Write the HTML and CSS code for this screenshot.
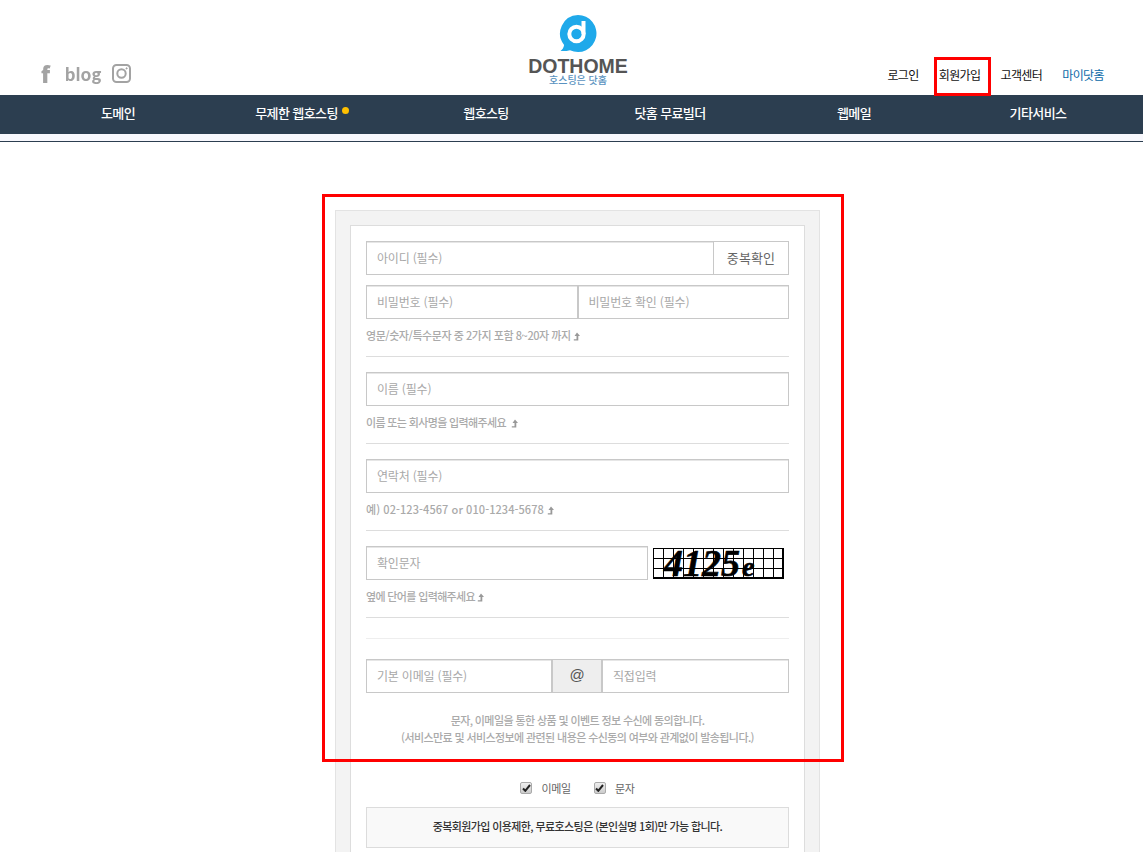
FILE: index.html
```html
<!DOCTYPE html>
<html lang="ko">
<head>
    <meta charset="UTF-8">
    <title>DOTHOME 회원가입</title>
    <link rel="stylesheet" href="styles.css">
</head>
<body>

<svg width="0" height="0" class="defs">
    <symbol id="up" viewBox="0 0 7 9">
        <path d="M4 .5L7 4H5.300V8.500H.8V7.200H3.500V4H1.500z" fill="#999"/>
    </symbol>
</svg>

<header class="top">
    <div class="sns">
        <span class="sns-f">f</span>
        <span class="sns-blog">blog</span>
        <svg class="sns-insta" width="19" height="19" viewBox="0 0 19 19" fill="none" stroke="#a3a3a3" stroke-width="2">
            <rect x="1" y="1" width="17" height="17" rx="3.5"/>
            <circle cx="9.5" cy="9.5" r="4.2"/>
            <circle cx="14.6" cy="4.4" r="0.6" fill="#a3a3a3" stroke-width="1"/>
        </svg>
    </div>
    <a class="logo">
        <svg class="logo-mark" width="40" height="38" viewBox="0 0 40 38">
            <path d="M20 1a18.500 18.500 0 1 1-8 35.200c-3 .8-6 1-9.500 .8 2-1.500 3.200-3.500 3.600-6A18.500 18.500 0 0 1 20 1z" fill="#1fa9ea"/>
            <circle cx="18.500" cy="20" r="7.200" fill="none" stroke="#fff" stroke-width="4"/>
            <path d="M25.500 7v13" stroke="#fff" stroke-width="4" fill="none"/>
        </svg>
        <span class="logo-name">DOTHOME</span>
        <span class="logo-sub">호스팅은 닷홈</span>
    </a>
    <nav class="util">
        <a>로그인</a>
        <a class="util-join">회원가입</a>
        <a>고객센터</a>
        <a class="util-my">마이닷홈</a>
    </nav>
</header>

<nav class="gnb">
    <a>도메인</a>
    <a>무제한 웹호스팅<i class="dot"></i></a>
    <a>웹호스팅</a>
    <a>닷홈 무료빌더</a>
    <a>웹메일</a>
    <a>기타서비스</a>
</nav>
<div class="gnb-line"></div>

<main class="content">
    <div class="mark-box"></div>
    <div class="outer">
        <form class="inner">
            <div class="field">
                <input class="input grow" placeholder="아이디 (필수)">
                <button type="button" class="check-btn">중복확인</button>
            </div>
            <div class="field field-gap">
                <input class="input half" placeholder="비밀번호 (필수)">
                <input class="input half" placeholder="비밀번호 확인 (필수)">
            </div>
            <p class="note note-mix">영문/숫자/특수문자 중 2가지 포함 8~20자 까지 <svg class="arrow"><use href="#up"/></svg></p>
            <hr class="sep">

            <div class="field">
                <input class="input grow" placeholder="이름 (필수)">
            </div>
            <p class="note">이름 또는 회사명을 입력해주세요 &nbsp;<svg class="arrow"><use href="#up"/></svg></p>
            <hr class="sep">

            <div class="field">
                <input class="input grow" placeholder="연락처 (필수)">
            </div>
            <p class="note note-num">예) 02-123-4567 or 010-1234-5678 <svg class="arrow"><use href="#up"/></svg></p>
            <hr class="sep">

            <div class="field">
                <input class="input captcha-input" placeholder="확인문자">
                <div class="captcha">4125<em>e</em></div>
            </div>
            <p class="note">옆에 단어를 입력해주세요 <svg class="arrow"><use href="#up"/></svg></p>
            <hr class="sep">
            <hr class="sep sep-light">

            <div class="field">
                <input class="input mail-id" placeholder="기본 이메일 (필수)">
                <div class="at">@</div>
                <input class="input grow" placeholder="직접입력">
            </div>
            <p class="agree">문자, 이메일을 통한 상품 및 이벤트 정보 수신에 동의합니다.<br>(서비스만료 및 서비스정보에 관련된 내용은 수신동의 여부와 관계없이 발송됩니다.)</p>
            <hr class="sep sep-agree">

            <div class="checks">
                <label class="check">
                    <span class="box"><svg width="9" height="8" viewBox="0 0 9 8"><path d="M1 4.500l2.300 2.300L8 1" fill="none" stroke="#222" stroke-width="2"/></svg></span>
                    이메일
                </label>
                <label class="check">
                    <span class="box"><svg width="9" height="8" viewBox="0 0 9 8"><path d="M1 4.500l2.300 2.300L8 1" fill="none" stroke="#222" stroke-width="2"/></svg></span>
                    문자
                </label>
            </div>
            <div class="notice">중복회원가입 이용제한, 무료호스팅은 (본인실명 1회)만 가능 합니다.</div>
        </form>
    </div>
</main>

</body>
</html>
```

FILE: styles.css
```css
html, body {
    margin: 0;
    height: 852px;
    overflow: hidden;
}

body {
    font-family: "Noto Sans CJK KR", "Noto Sans", sans-serif;
    font-size: 12px;
    color: #222;
    background: #fff;
}

.defs {
    display: block;
}

/* header */
.top {
    display: grid;
    grid-template-columns: 528px 100px 1fr;
    height: 95px;
}

.sns {
    display: flex;
    align-items: center;
    height: 19px;
    margin-top: 64px;
    padding-left: 41px;
    color: #a3a3a3;
}

.sns-f {
    font: 800 22px "Open Sans", sans-serif;
    width: 24px;
    filter: blur(0.4px);
}

.sns-blog {
    font: 900 18px "Lato", sans-serif;
    letter-spacing: 0.5px;
    width: 47px;
    filter: blur(0.4px);
}

.logo {
    display: flex;
    flex-direction: column;
    align-items: center;
    padding-top: 14px;
}

.logo-mark {
    display: block;
}

.logo-name {
    font: bold 19.500px/15px "Liberation Sans", sans-serif;
    color: #555;
    margin-top: 7px;
}

.logo-sub {
    font-size: 10px;
    line-height: 11px;
    font-weight: 500;
    color: #5a92c0;
}

.util {
    display: flex;
    justify-content: flex-end;
    gap: 20px;
    padding: 65px 39px 0 0;
    font-size: 12px;
    line-height: 20px;
    letter-spacing: -0.6px;
    color: #111;
}

.util-join {
    position: relative;
}

.util-join::after {
    content: "";
    position: absolute;
    left: -5px;
    top: -8px;
    width: 51px;
    height: 33px;
    border: 3px solid #f00;
}

.util-my {
    color: #0b6aa8;
}

/* main menu */
.gnb {
    display: grid;
    grid-template-columns: repeat(6, 184px);
    padding-left: 26px;
    height: 39px;
    background: #2c3e50;
    color: #fff;
    font-size: 13px;
    font-weight: 500;
    line-height: 36px;
    letter-spacing: -0.6px;
    text-align: center;
}

.dot {
    display: inline-block;
    width: 7px;
    height: 7px;
    margin-left: 4px;
    border-radius: 50%;
    background: #ffc000;
    vertical-align: 4px;
}

.gnb-line {
    height: 7px;
    background: #f8f8fd;
    border-bottom: 1px solid #2c3e50;
}

/* form */
.content {
    position: relative;
    padding-top: 68px;
}

.mark-box {
    position: absolute;
    left: 322px;
    top: 52px;
    width: 516px;
    height: 562px;
    border: 3px solid #f00;
    z-index: 2;
}

.outer {
    width: 455px;
    margin-left: 335px;
    padding: 14px 14px 0;
    height: 700px;
    background: #f3f3f3;
    border: 1px solid #e3e3e3;
}

.inner {
    padding: 15px 15px 0;
    height: 700px;
    background: #fff;
    border: 1px solid #ddd;
}

.field {
    display: flex;
    height: 34px;
}

.field-gap {
    margin-top: 10px;
}

.input {
    box-sizing: border-box;
    height: 34px;
    margin: 0;
    padding: 0 10px 2px;
    border: 1px solid #c8c8c8;
    box-shadow: inset 0 1px #e6e6e6;
    outline: none;
    font-family: inherit;
    font-size: 12px;
    letter-spacing: -0.2px;
    background: #fff;
    color: #222;
}

.input::placeholder {
    color: #a8a8a8;
    opacity: 1;
}

.grow {
    flex: 1;
    min-width: 0;
}

.half {
    width: 50%;
}

.check-btn {
    width: 76px;
    margin-left: -1px;
    height: 34px;
    border: 1px solid #c8c8c8;
    background: #fff;
    font-family: inherit;
    font-size: 13px;
    letter-spacing: 0.15px;
    color: #666;
    padding: 0 0 2px;
}

.note {
    margin: 0;
    padding-top: 6px;
    height: 31px;
    font-size: 11px;
    font-weight: 500;
    line-height: 20px;
    letter-spacing: -0.65px;
    color: #aaa;
}

.note-mix {
    letter-spacing: -0.45px;
}

.note-num {
    letter-spacing: 0.07px;
}

.arrow {
    width: 7px;
    height: 9px;
    vertical-align: -1px;
}

.sep {
    height: 1px;
    margin: 0 0 15px;
    border: 0;
    background: #ddd;
}

.sep-light {
    margin: 20px 0 20px;
    background: #eee;
}

.captcha-input {
    width: 282px;
}

.captcha {
    box-sizing: border-box;
    width: 131px;
    height: 31px;
    margin: 2px 0 0 5px;
    border: 1px solid #000;
    background:
        repeating-linear-gradient(to right, #000 0 1px, transparent 1px 10px) -1px 0,
        repeating-linear-gradient(to bottom, #000 0 1px, transparent 1px 10px) 0 -1px;
    background-color: #fff;
    font: italic bold 38px/28px "Liberation Serif", serif;
    -webkit-text-stroke: 0.6px #000;
    color: #000;
    padding-left: 10px;
    white-space: nowrap;
}

.captcha em {
    font-size: 28px;
    margin-left: 2px;
}

.mail-id {
    width: 186px;
}

.at {
    box-sizing: border-box;
    width: 50px;
    height: 34px;
    border: 1px solid #c8c8c8;
    background: #eee;
    text-align: center;
    font: 15px/30px "Liberation Sans", sans-serif;
    color: #555;
}

.agree {
    margin: 0;
    padding-top: 19px;
    height: 47px;
    font-size: 11px;
    font-weight: 500;
    line-height: 17px;
    letter-spacing: -0.6px;
    color: #aaa;
    text-align: center;
}

.sep-agree {
    margin-bottom: 0;
}

.checks {
    display: flex;
    justify-content: center;
    gap: 23px;
    height: 47px;
    padding-top: 8px;
    box-sizing: border-box;
    align-items: center;
    font-size: 11px;
    letter-spacing: -0.3px;
    color: #666;
}

.check {
    display: flex;
    align-items: center;
    gap: 9px;
}

.box {
    box-sizing: border-box;
    display: flex;
    align-items: center;
    justify-content: center;
    width: 12px;
    height: 12px;
    border: 1px solid #aaa;
    border-radius: 2px;
    background: linear-gradient(#eee, #ccc);
}

.notice {
    box-sizing: border-box;
    height: 41px;
    border: 1px solid #dcdcdc;
    background: #f9f9f9;
    text-align: center;
    font-size: 11px;
    font-weight: 500;
    line-height: 36px;
    letter-spacing: -0.6px;
    color: #333;
}
```
